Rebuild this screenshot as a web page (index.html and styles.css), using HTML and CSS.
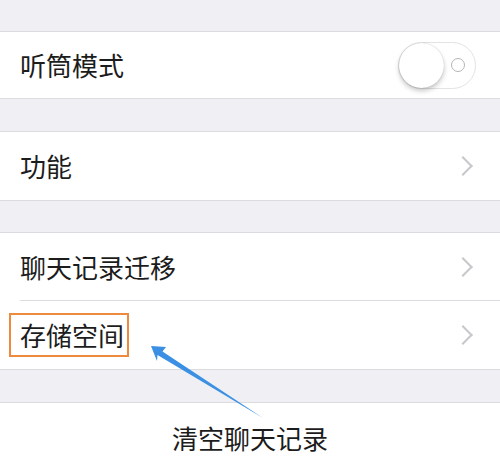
FILE: index.html
```html
<!DOCTYPE html>
<html lang="zh-CN">

<head>
    <meta charset="UTF-8">
    <meta name="viewport" content="width=device-width, initial-scale=1.0">
    <title>设置</title>
    <link rel="stylesheet" href="styles.css">
</head>

<body>
    <div class="page">
        <div class="group first">
            <div class="row short">
                <span class="label">听筒模式</span>
                <span class="switch"><span class="knob"></span><span class="ring"></span></span>
            </div>
        </div>

        <div class="group">
            <div class="row tall">
                <span class="label">功能</span>
                <span class="chevron"></span>
            </div>
        </div>

        <div class="group narrow">
            <div class="row">
                <span class="label">聊天记录迁移</span>
                <span class="chevron"></span>
            </div>
            <div class="row tall inset">
                <span class="label marked">存储空间</span>
                <span class="chevron"></span>
            </div>
        </div>

        <div class="group">
            <div class="row center">
                <span class="label">清空聊天记录</span>
            </div>
        </div>

        <!-- 标注箭头 -->
        <svg class="arrow" width="500" height="468" viewBox="0 0 500 468">
            <path d="M151 346 L166 347 L162.5 351.5 L263 418 L157.5 355 L157 361 Z" fill="#3b90e3"/>
        </svg>
    </div>
</body>

</html>
```
FILE: styles.css
```css
body {
    margin: 0;
    background-color: #efeff4;
    font-family: "Noto Sans CJK SC", "Noto Sans", sans-serif;
    color: #1c1c1c;
}

.page {
    position: relative;
    width: 500px;
    height: 468px;
    overflow: hidden;
}

.group {
    margin-top: 32px;
    background-color: #fff;
    border-top: 1px solid #dcdce0;
    border-bottom: 1px solid #dcdce0;
}

.group.first {
    margin-top: 31px;
}

.group.narrow {
    margin-top: 31px;
}

.row {
    display: flex;
    align-items: center;
    justify-content: space-between;
    height: 67px;
    padding: 0 26px 0 20px;
}

.row.short {
    height: 66px;
}

.row.tall {
    height: 68px;
}

/* đường kẻ giữa hai dòng */
.row.inset {
    border-top: 1px solid #dcdce0;
    margin-left: 20px;
    padding-left: 0;
}

.row.center {
    justify-content: center;
    padding: 0;
    height: 70px;
}

.label {
    font-size: 26px;
    line-height: 36px;
}

.marked {
    margin-left: -11px;
    padding: 2px 3px 2px 9px;
    border: 2px solid #ee8a3d;
}

.chevron {
    width: 12px;
    height: 12px;
    border-top: 2px solid #c7c7cc;
    border-right: 2px solid #c7c7cc;
    transform: rotate(45deg);
    margin-right: 4px;
}

.switch {
    position: relative;
    display: flex;
    align-items: center;
    justify-content: flex-end;
    width: 78px;
    height: 47px;
    margin-right: -2px;
    border: 1px solid #e3e3e6;
    border-radius: 25px;
    box-sizing: border-box;
    padding-right: 10px;
}

.knob {
    position: absolute;
    left: 0;
    top: 0;
    width: 45px;
    height: 45px;
    border-radius: 50%;
    background-color: #fff;
    box-shadow: 0 3px 5px rgba(0, 0, 0, 0.22), 0 0 1px rgba(0, 0, 0, 0.25);
}

.ring {
    width: 12px;
    height: 12px;
    border: 1.5px solid #b5b5b8;
    border-radius: 50%;
}

.arrow {
    position: absolute;
    left: 0;
    top: 0;
}
```
